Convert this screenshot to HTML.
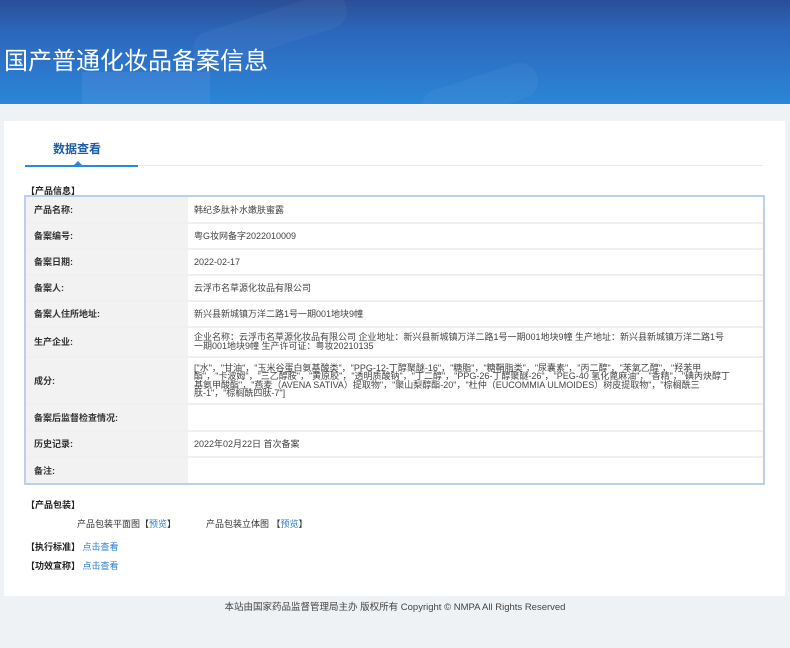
<!DOCTYPE html>
<html><head><meta charset="utf-8">
<style>
*{margin:0;padding:0;box-sizing:border-box}
body{width:790px;height:648px;background:#eef2f5;font-family:"Liberation Sans","Noto Sans CJK SC",sans-serif;font-size:9px;color:#333;position:relative;overflow:hidden}
.hdr{position:absolute;left:0;top:0;width:790px;height:104px;background:linear-gradient(180deg,#2a4f96 0%,#2c66bb 30%,#2c78cc 70%,#2a86d6 100%);overflow:hidden}
.hdr .b1{position:absolute;left:190px;top:12px;width:160px;height:36px;border-radius:18px;background:rgba(255,255,255,.04);transform:rotate(-18deg)}
.hdr .b2{position:absolute;left:82px;top:72px;width:128px;height:34px;background:rgba(120,160,240,.18)}
.hdr .b3{position:absolute;left:420px;top:76px;width:120px;height:36px;border-radius:18px;background:rgba(255,255,255,.04);transform:rotate(-18deg)}
.hdr h1{position:absolute;left:4px;top:41px;font-size:24px;font-weight:normal;color:#fff;letter-spacing:0;font-family:"Liberation Sans","Noto Sans CJK SC",sans-serif}
.panel{position:absolute;left:4px;top:121px;width:781px;height:475px;background:#fff}
.tab{position:absolute;left:53px;top:140px;font-size:12px;font-weight:bold;color:#1a5ea8}
.tabline{position:absolute;left:25px;top:165px;width:738px;height:1px;background:#e3e6ea}
.tabact{position:absolute;left:25px;top:165px;width:113px;height:2px;background:#2a88d8}
.tri{position:absolute;left:74px;top:161px;width:0;height:0;border-left:4px solid transparent;border-right:4px solid transparent;border-bottom:4px solid #2a88d8}
.sec{position:absolute;font-weight:bold;font-size:9px;color:#222}
table{position:absolute;left:26px;top:197px;width:737px;border-collapse:collapse;outline:2px solid #bcd0ec}
td{border-bottom:2px solid #f0f0f0;vertical-align:middle;font-size:9px;line-height:10px}
td.l{width:162px;background:#f2f2f2;font-weight:bold;padding-left:8px;color:#333}
td.v{padding-left:6px;padding-right:30px;color:#444}
tr:last-child td{border-bottom:none}
.a{color:#2a7fd0}
.ft{position:absolute;left:0;width:790px;text-align:center;top:600px;font-size:9.5px;color:#444}
</style></head><body>
<div class="hdr"><div class="b1"></div><div class="b2"></div><div class="b3"></div><h1>国产普通化妆品备案信息</h1></div>
<div class="panel"></div>
<div class="tab">数据查看</div>
<div class="tabline"></div><div class="tabact"></div><div class="tri"></div>
<div class="sec" style="left:26px;top:184px">【产品信息】</div>
<table>
<tr style="height:26px"><td class="l">产品名称:</td><td class="v">韩纪多肽补水嫩肤蜜露</td></tr>
<tr style="height:26px"><td class="l">备案编号:</td><td class="v">粤G妆网备字2022010009</td></tr>
<tr style="height:26px"><td class="l">备案日期:</td><td class="v">2022-02-17</td></tr>
<tr style="height:26px"><td class="l">备案人:</td><td class="v">云浮市名草源化妆品有限公司</td></tr>
<tr style="height:26px"><td class="l">备案人住所地址:</td><td class="v">新兴县新城镇万洋二路1号一期001地块9幢</td></tr>
<tr style="height:30px"><td class="l">生产企业:</td><td class="v" style="line-height:9px">企业名称：云浮市名草源化妆品有限公司 企业地址：新兴县新城镇万洋二路1号一期001地块9幢 生产地址：新兴县新城镇万洋二路1号一期001地块9幢 生产许可证：粤妆20210135</td></tr>
<tr style="height:47px"><td class="l">成分:</td><td class="v" style="line-height:8.5px">["水"，"甘油"，"玉米谷蛋白氨基酸类"，"PPG-12-丁醇聚醚-16"，"糖脂"，"糖鞘脂类"，"尿囊素"，"丙二醇"，"苯氧乙醇"，"羟苯甲酯"，"卡波姆"，"三乙醇胺"，"黄原胶"，"透明质酸钠"，"丁二醇"，"PPG-26-丁醇聚醚-26"，"PEG-40 氢化蓖麻油"，"香精"，"碘丙炔醇丁基氨甲酸酯"，"燕麦（AVENA SATIVA）提取物"，"聚山梨醇酯-20"，"杜仲（EUCOMMIA ULMOIDES）树皮提取物"，"棕榈酰三肽-1"，"棕榈酰四肽-7"]</td></tr>
<tr style="height:27px"><td class="l">备案后监督检查情况:</td><td class="v"></td></tr>
<tr style="height:26px"><td class="l">历史记录:</td><td class="v">2022年02月22日 首次备案</td></tr>
<tr style="height:26px"><td class="l">备注:</td><td class="v"></td></tr>
</table>
<div class="sec" style="left:26px;top:498px">【产品包装】</div>
<div style="position:absolute;left:77px;top:517px;color:#333">产品包装平面图【<span class="a">预览</span>】</div>
<div style="position:absolute;left:206px;top:517px;color:#333">产品包装立体图 【<span class="a">预览</span>】</div>
<div class="sec" style="left:26px;top:540px">【执行标准】 <span class="a" style="font-weight:normal">点击查看</span></div>
<div class="sec" style="left:26px;top:559px">【功效宣称】 <span class="a" style="font-weight:normal">点击查看</span></div>
<div class="ft" style="top:599px">本站由国家药品监督管理局主办 版权所有 Copyright © NMPA All Rights Reserved</div>
</body></html>
